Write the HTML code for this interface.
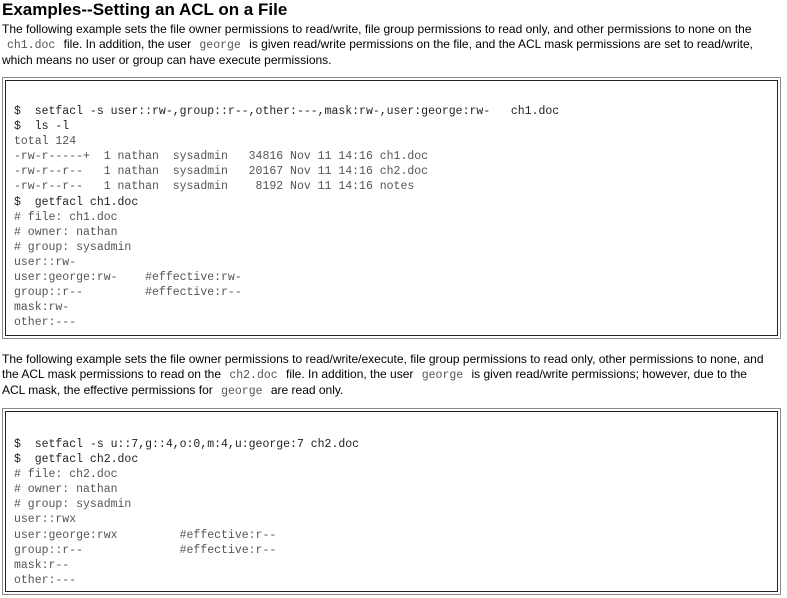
<!DOCTYPE html>
<html><head><style>
body{margin:0;background:#fff;font-family:"Liberation Sans",Arial,sans-serif;color:#000;}
h2{font-size:17px;font-weight:bold;margin:0;position:absolute;left:2px;top:0px;line-height:20px;}
p{position:absolute;left:2px;margin:0;font-size:12px;line-height:15px;width:785px;white-space:nowrap;}
code{font-family:"Liberation Mono",monospace;font-size:11.5px;color:#555;padding:0 5px;}
.box{position:absolute;left:2px;width:777px;border:1px solid #888;}
.in{border:1px solid #222;margin:2px;}
pre{margin:0;font-family:"Liberation Mono",monospace;font-size:11.5px;line-height:15.1px;color:#555;padding:0 8px;}
pre b{font-weight:normal;color:#222;}
</style></head><body>
<h2>Examples--Setting an ACL on a File</h2>
<p style="top:22px">The following example sets the file owner permissions to read/write, file group permissions to read only, and other permissions to none on the<br><code>ch1.doc</code> file. In addition, the user <code>george</code> is given read/write permissions on the file, and the ACL mask permissions are set to read/write,<br>which means no user or group can have execute permissions.</p>
<div class="box" style="top:77px;height:260px"><div class="in" style="height:254px"><pre style="padding-top:23px"><b>$  setfacl -s user::rw-,group::r--,other:---,mask:rw-,user:george:rw-   ch1.doc</b>
<b>$  ls -l</b>
total 124
-rw-r-----+  1 nathan  sysadmin   34816 Nov 11 14:16 ch1.doc
-rw-r--r--   1 nathan  sysadmin   20167 Nov 11 14:16 ch2.doc
-rw-r--r--   1 nathan  sysadmin    8192 Nov 11 14:16 notes
<b>$  getfacl ch1.doc</b>
# file: ch1.doc
# owner: nathan
# group: sysadmin
user::rw-
user:george:rw-    #effective:rw-
group::r--         #effective:r--
mask:rw-
other:---</pre></div></div>
<p style="top:352px">The following example sets the file owner permissions to read/write/execute, file group permissions to read only, other permissions to none, and<br>the ACL mask permissions to read on the <code>ch2.doc</code> file. In addition, the user <code>george</code> is given read/write permissions; however, due to the<br>ACL mask, the effective permissions for <code>george</code> are read only.</p>
<div class="box" style="top:408px;height:185px"><div class="in" style="height:179px"><pre style="padding-top:25px"><b>$  setfacl -s u::7,g::4,o:0,m:4,u:george:7 ch2.doc</b>
<b>$  getfacl ch2.doc</b>
# file: ch2.doc
# owner: nathan
# group: sysadmin
user::rwx
user:george:rwx         #effective:r--
group::r--              #effective:r--
mask:r--
other:---</pre></div></div>
</body></html>
